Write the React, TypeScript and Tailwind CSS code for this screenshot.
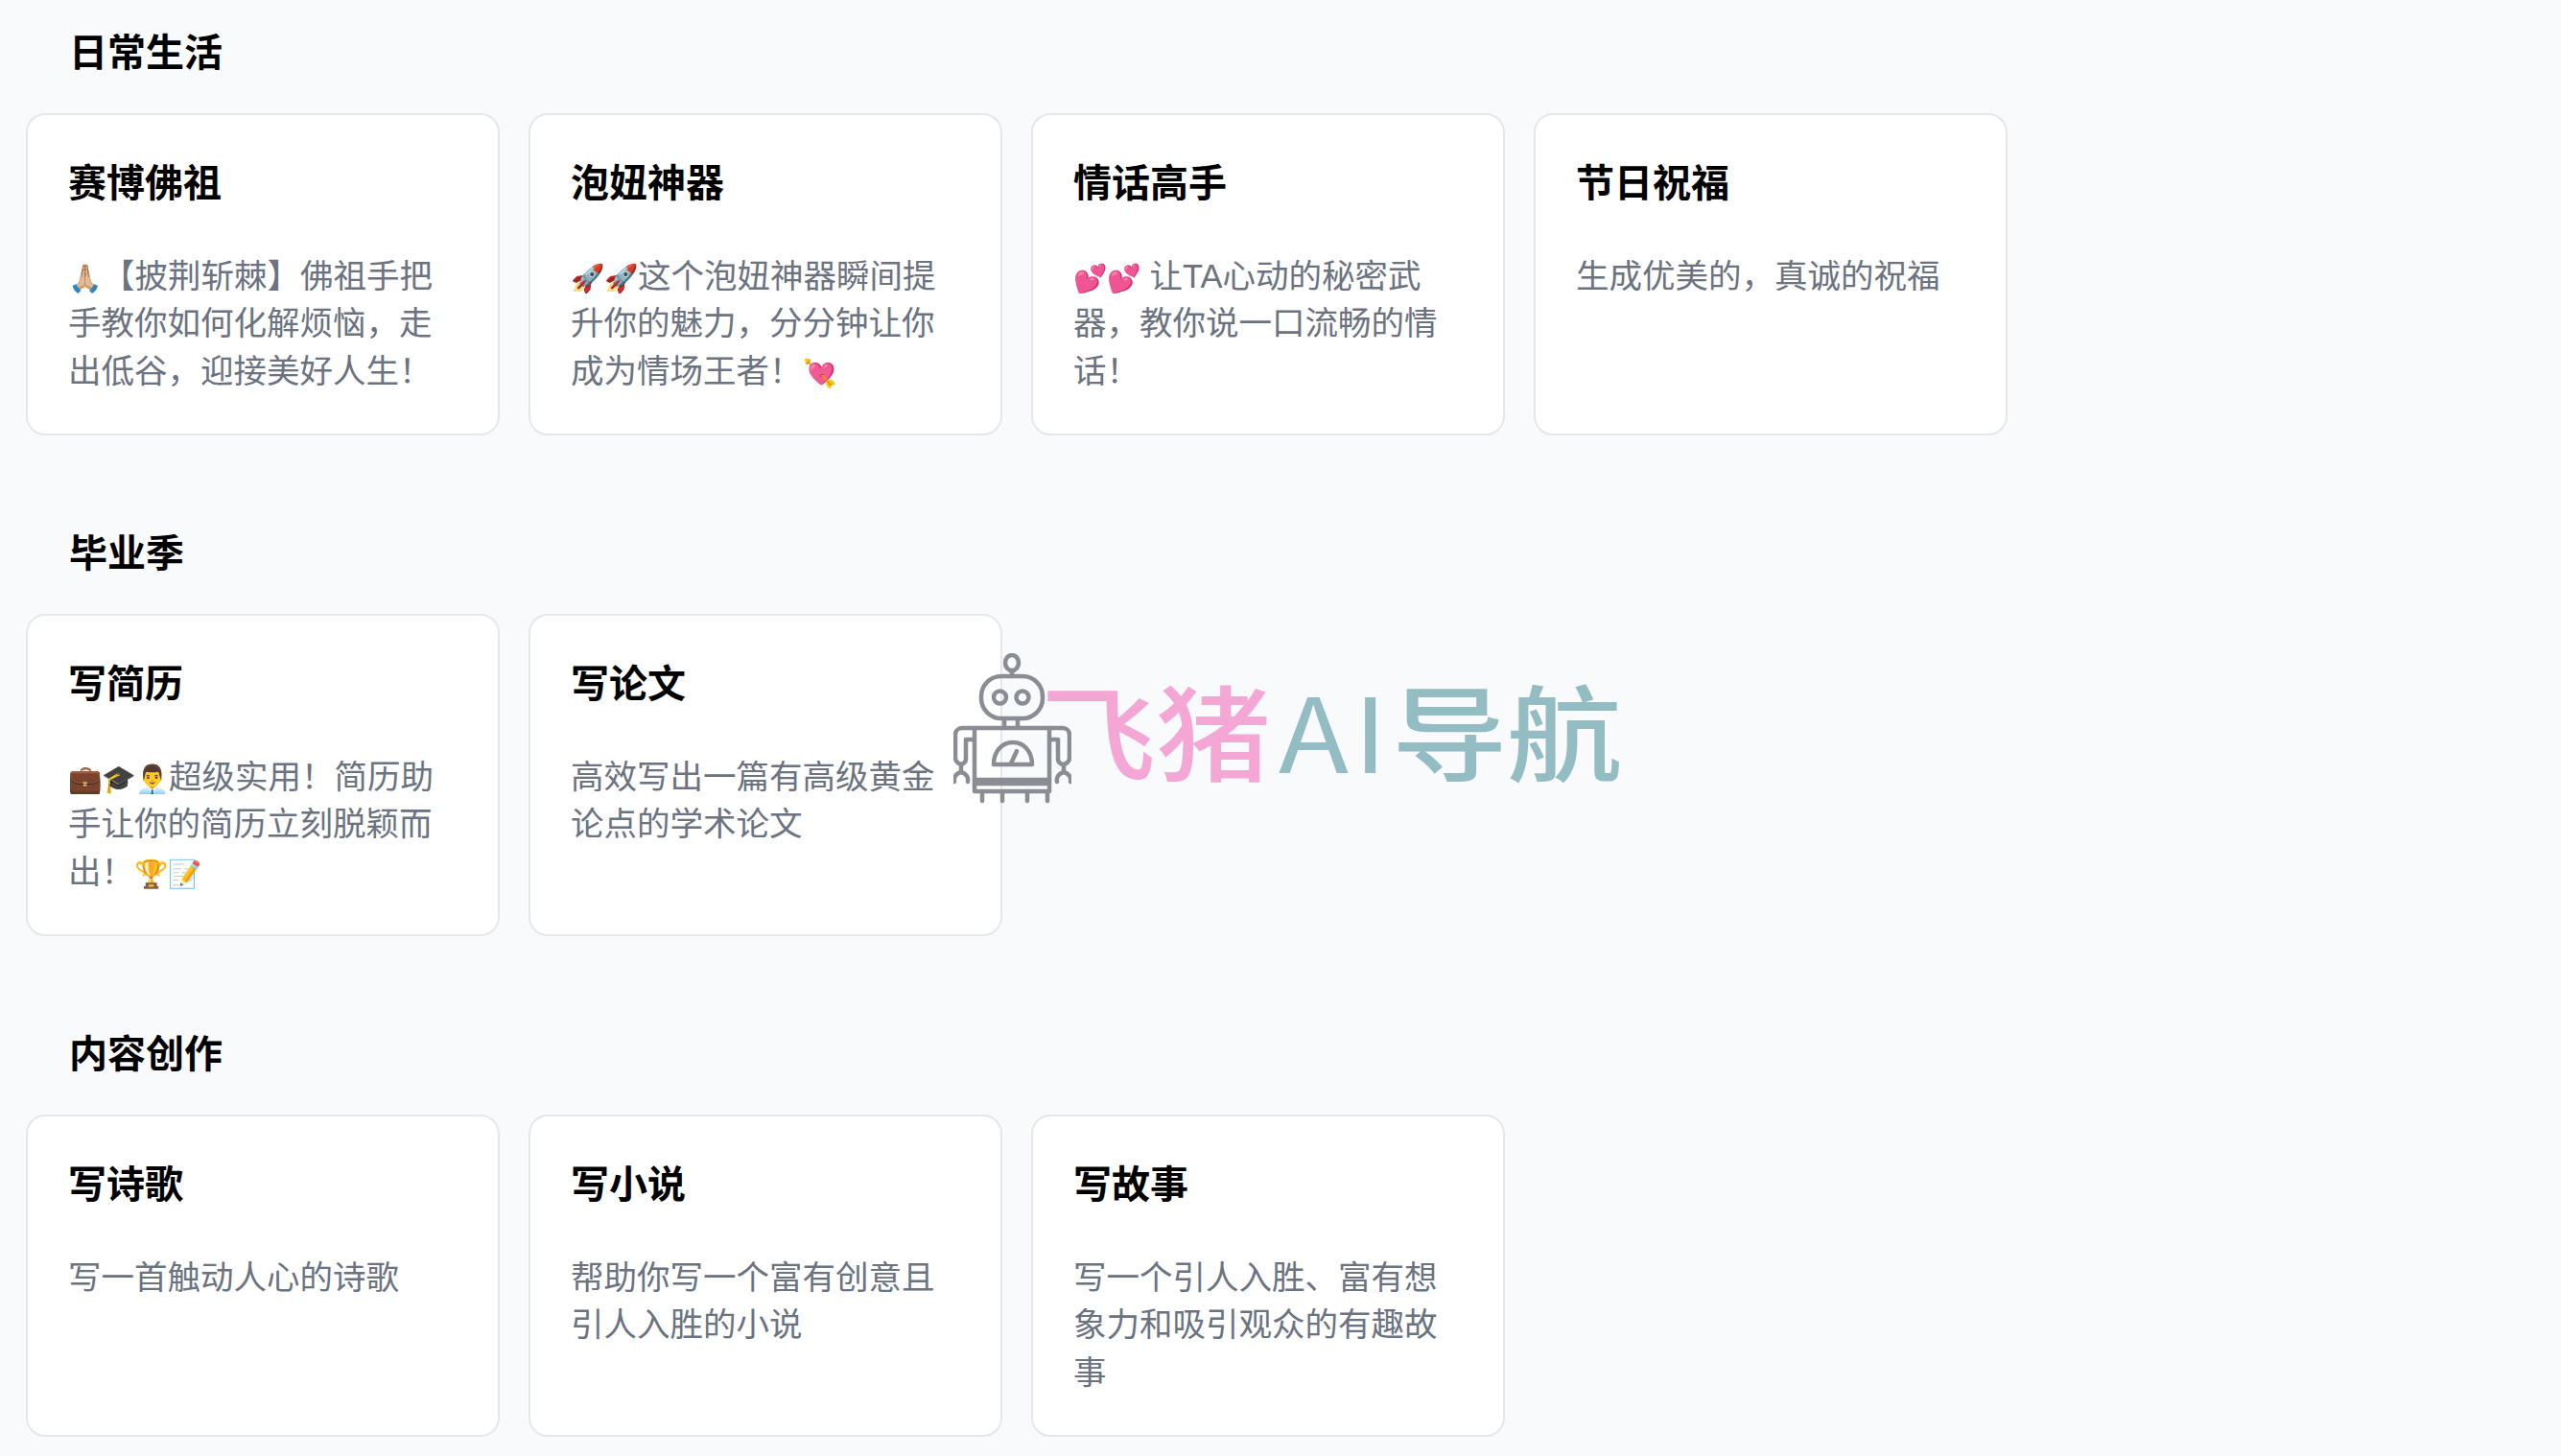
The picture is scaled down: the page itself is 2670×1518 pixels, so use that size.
const sections = [
  {
    title: "日常生活",
    cards: [
      { name: "赛博佛祖", desc: "🙏🏼【披荆斩棘】佛祖手把手教你如何化解烦恼，走出低谷，迎接美好人生！" },
      { name: "泡妞神器", desc: "🚀🚀这个泡妞神器瞬间提升你的魅力，分分钟让你成为情场王者！💘" },
      { name: "情话高手", desc: "💕💕 让TA心动的秘密武器，教你说一口流畅的情话！" },
      { name: "节日祝福", desc: "生成优美的，真诚的祝福" },
    ],
  },
  {
    title: "毕业季",
    cards: [
      { name: "写简历", desc: "💼🎓👨‍💼超级实用！简历助手让你的简历立刻脱颖而出！🏆📝" },
      { name: "写论文", desc: "高效写出一篇有高级黄金论点的学术论文" },
    ],
  },
  {
    title: "内容创作",
    cards: [
      { name: "写诗歌", desc: "写一首触动人心的诗歌" },
      { name: "写小说", desc: "帮助你写一个富有创意且引人入胜的小说" },
      { name: "写故事", desc: "写一个引人入胜、富有想象力和吸引观众的有趣故事" },
    ],
  },
];

// emoji font here is wider than the one in the picture, so shrink just the emoji
const emojiRe = /(\p{Extended_Pictographic}(?:\p{Emoji_Modifier}|\u200d\p{Extended_Pictographic})*)/u;

function Desc({ text }: { text: string }) {
  return (
    <p className="mt-[48px] text-[34.5px] leading-[49.4px] text-[#6b7280]">
      {text.split(emojiRe).map((part, i) =>
        i % 2 ? (
          <span key={i} className="text-[28.5px] leading-[0]">{part}</span>
        ) : (
          part
        )
      )}
    </p>
  );
}

function Logo() {
  return (
    <div className="absolute left-[994px] top-[681px] flex items-start pointer-events-none">
      <svg width="123" height="157" viewBox="0 0 123 157" fill="none" stroke="#8a8d93" strokeWidth="4.5" strokeLinecap="round" strokeLinejoin="round">
        <ellipse cx="61" cy="10" rx="7" ry="8" />
        <path d="M61 18v6" />
        <rect x="29" y="24" width="64" height="44" rx="21" />
        <circle cx="48.5" cy="46" r="6.5" />
        <circle cx="72" cy="46" r="6.5" />
        <path d="M53 68v10M67 68v10" />
        <path d="M22 78h78v66H22z" />
        <path d="M22 132h78M22 136h78" />
        <path d="M22 78H9c-4 0-7 3-7 7v24c0 4 3 6 6 7v8M22 90h-9v20c0 2-1 5-5 6" />
        <path d="M100 78h14c4 0 7 3 7 7v24c0 4-3 6-6 7v8M100 90h9v20c0 2 1 5 5 6" />
        <path d="M1 134c-1-6 3-9 7-10 4 1 8 4 7 10M108 134c-1-6 3-9 7-10 4 1 8 4 7 10" />
        <path d="M42 116c0-13 8-23 20-23s20 10 20 23z" />
        <path d="M60 115l6-13" />
        <path d="M30 144v10M51 144v10M77 144v10M98 144v10" />
      </svg>
      <div className="flex -ml-[32px] mt-[15px] origin-top scale-y-90 text-[120px] leading-[140px] font-medium whitespace-nowrap font-['Noto_Sans_CJK_SC',sans-serif]">
        <span className="text-[#f4a6d4]">飞猪</span>
        <span className="ml-[8px] text-[#93bcc3] font-normal tracking-[5px]">AI</span>
        <span className="text-[#93bcc3]">导航</span>
      </div>
    </div>
  );
}

export default function App() {
  return (
    <div className="relative min-h-[1518px] overflow-hidden bg-[#f9fafb] font-['Liberation_Sans','Noto_Sans_CJK_SC',sans-serif]">
      <div className="flex flex-col gap-[98px] pl-[27px] pt-[30px]">
        {sections.map((s) => (
          <section key={s.title}>
            <h2 className="pl-[45px] h-[50px] text-[40px] leading-[50px] font-bold text-black">{s.title}</h2>
            <div className="mt-[38px] flex gap-[30px]">
              {s.cards.map((c) => (
                <div key={c.name} className="w-[494px] h-[336px] rounded-[20px] border-2 border-[#e5e7eb] bg-white px-[42px] pt-[46px]">
                  <h3 className="text-[40px] leading-[50px] font-bold text-black">{c.name}</h3>
                  <Desc text={c.desc} />
                </div>
              ))}
            </div>
          </section>
        ))}
      </div>
      <Logo />
    </div>
  );
}
